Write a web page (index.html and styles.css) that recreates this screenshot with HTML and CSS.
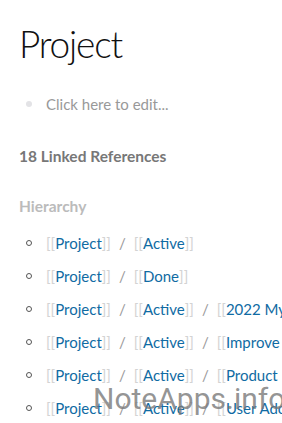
FILE: index.html
```html
<!DOCTYPE html>
<html lang="en">
  <head>
    <meta charset="UTF-8" />
    <meta name="viewport" content="width=device-width, initial-scale=1.0" />
    <title>Project</title>
    <link rel="stylesheet" href="styles.css">
  </head>
  <body>
    <div class="page">
      <h1 class="page-title">Project</h1>
      <div class="block">
        <span class="dot"></span>
        <span class="placeholder">Click here to edit...</span>
      </div>

      <h2 class="refs-title">18 Linked References</h2>

      <h3 class="hier-title">Hierarchy</h3>
      <ul class="hier-list">
        <li><span class="br">[[</span><a href="#">Project</a><span class="br">]]</span><span class="sep">/</span><span class="br">[[</span><a href="#">Active</a><span class="br">]]</span></li>
        <li><span class="br">[[</span><a href="#">Project</a><span class="br">]]</span><span class="sep">/</span><span class="br">[[</span><a href="#">Done</a><span class="br">]]</span></li>
        <li><span class="br">[[</span><a href="#">Project</a><span class="br">]]</span><span class="sep">/</span><span class="br">[[</span><a href="#">Active</a><span class="br">]]</span><span class="sep">/</span><span class="br">[[</span><a href="#">2022 Mymind</a><span class="br">]]</span></li>
        <li><span class="br">[[</span><a href="#">Project</a><span class="br">]]</span><span class="sep">/</span><span class="br">[[</span><a href="#">Active</a><span class="br">]]</span><span class="sep">/</span><span class="br">[[</span><a href="#">Improve Notes</a><span class="br">]]</span></li>
        <li><span class="br">[[</span><a href="#">Project</a><span class="br">]]</span><span class="sep">/</span><span class="br">[[</span><a href="#">Active</a><span class="br">]]</span><span class="sep">/</span><span class="br">[[</span><a href="#">Product Launch</a><span class="br">]]</span></li>
        <li><span class="br">[[</span><a href="#">Project</a><span class="br">]]</span><span class="sep">/</span><span class="br">[[</span><a href="#">Active</a><span class="br">]]</span><span class="sep">/</span><span class="br">[[</span><a href="#">User Adoption</a><span class="br">]]</span></li>
      </ul>
    </div>
    <div class="watermark">NoteApps.info</div>
  </body>
</html>
```

FILE: styles.css
```css
body {
  font-family: Lato, "Open Sans", sans-serif;
  margin: 0;
  padding: 0;
  background-color: #fff;
  overflow: hidden;
}
.page {
  padding: 21px 0 0 19px;
  overflow: hidden;
}
.page-title {
  font-size: 37px;
  font-weight: 300;
  letter-spacing: -1.2px;
  color: #111;
  margin: 0;
  line-height: 46px;
}
.block {
  display: flex;
  align-items: center;
  height: 24px;
  margin-top: 25px;
}
.dot {
  width: 6px;
  height: 6px;
  border-radius: 50%;
  background-color: #e3e3e6;
  margin: 0 14px 0 7px;
}
.placeholder {
  font-size: 15px;
  color: #999;
}
.refs-title {
  font-size: 15.5px;
  font-weight: 700;
  color: #777;
  margin: 30px 0 0;
  line-height: 20px;
}
.hier-title {
  font-size: 15.5px;
  font-weight: 700;
  color: #bbb;
  margin: 30px 0 0;
  line-height: 20px;
}
.hier-list {
  list-style: none;
  margin: 10px 0 0;
  padding: 0;
}
.hier-list li {
  display: flex;
  align-items: center;
  height: 33px;
  font-size: 15px;
  white-space: nowrap;
}
.hier-list li::before {
  content: "";
  width: 4px;
  height: 4px;
  border: 1px solid #555;
  border-radius: 50%;
  margin: 0 14px 0 7px;
  flex: none;
}
.hier-list a {
  color: #106ba3;
  text-decoration: none;
}
.br {
  color: #d3d3d3;
}
.sep {
  color: #999;
  margin: 0 8px;
}
.watermark {
  position: absolute;
  left: 93px;
  top: 381px;
  font-family: Roboto, sans-serif;
  font-size: 30px;
  color: rgba(120, 120, 120, 0.8);
  white-space: nowrap;
}
```
